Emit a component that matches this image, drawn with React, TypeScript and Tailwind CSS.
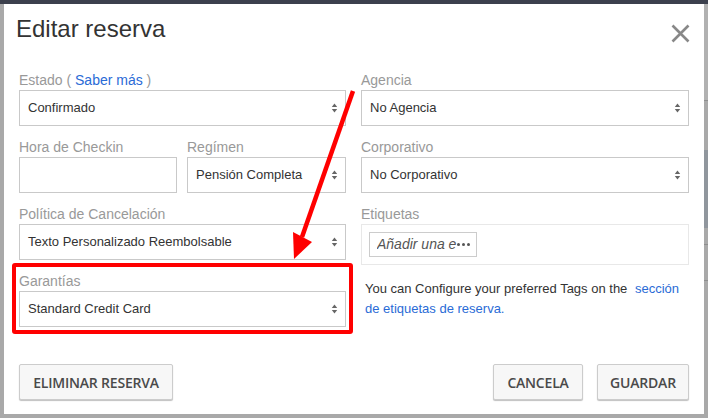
import type { ReactNode } from "react"

const SANS = "font-['Liberation_Sans',Arial,sans-serif]"

function Arrows() {
  return (
    <svg width="7" height="12" viewBox="0 0 7 12" aria-hidden>
      <path d="M3.5 1.5 L6.2 5 L0.8 5 Z" fill="#666" />
      <path d="M3.5 10.5 L6.2 7 L0.8 7 Z" fill="#666" />
    </svg>
  )
}

function Label({ children }: { children: ReactNode }) {
  return <div className="h-5 text-[14px] leading-5 text-[#999]">{children}</div>
}

function Select({ value }: { value: string }) {
  return (
    <div className="flex h-9 items-center justify-between border border-[#c9c9c9] bg-white pl-[8px] pr-[7px] text-[13px] text-[#333]">
      <span>{value}</span>
      <Arrows />
    </div>
  )
}

function Field({ label, children }: { label: ReactNode; children: ReactNode }) {
  return (
    <div className="mb-[11px]">
      <Label>{label}</Label>
      {children}
    </div>
  )
}

function Button({ children, width }: { children: ReactNode; width: string }) {
  return (
    <button
      className={`flex h-9 items-center justify-center rounded-[2px] border border-[#ccc] bg-[#f7f7f7] font-['Open_Sans',sans-serif] text-[14px] font-semibold tracking-[-0.2px] text-[#4a4a4a] shadow-[0_1px_1px_rgba(0,0,0,0.25)] ${width}`}
    >
      {children}
    </button>
  )
}

export default function App() {
  return (
    <div className={`relative h-[418px] w-[708px] overflow-hidden bg-[#a9a9a9] ${SANS}`}>
      <div className="h-[4px] bg-[#3c404d]" />
      <div className="flex">
        <div className="w-[4px]" />
        <div className="flex h-[410px] w-[700px] flex-col bg-white">
          <div className="flex items-start justify-between pl-[12px] pr-[14px] pt-[10px]">
            <h1 className="text-[24px] leading-[30px] text-[#333]">Editar reserva</h1>
            <svg width="19" height="19" viewBox="0 0 19 19" className="mt-[10px]" aria-hidden>
              <path d="M1.5 1.5 L17.5 17.5 M17.5 1.5 L1.5 17.5" stroke="#888" strokeWidth="2.6" />
            </svg>
          </div>

          <div className="mt-[26px] flex gap-[15px] px-[15px]">
            <div className="w-[327px]">
              <Field
                label={
                  <>
                    Estado ( <span className="text-[#2a6bd6]">Saber más</span> )
                  </>
                }
              >
                <Select value="Confirmado" />
              </Field>
              <div className="flex gap-[10px]">
                <div className="w-[158px]">
                  <Field label="Hora de Checkin">
                    <div className="h-9 border border-[#c9c9c9] bg-white" />
                  </Field>
                </div>
                <div className="flex-1">
                  <Field label="Regímen">
                    <Select value="Pensión Completa" />
                  </Field>
                </div>
              </div>
              <Field label="Política de Cancelación">
                <Select value="Texto Personalizado Reembolsable" />
              </Field>
              <Field label="Garantías">
                <Select value="Standard Credit Card" />
              </Field>
            </div>

            <div className="w-[328px]">
              <Field label="Agencia">
                <Select value="No Agencia" />
              </Field>
              <Field label="Corporativo">
                <Select value="No Corporativo" />
              </Field>
              <Label>Etiquetas</Label>
              <div className="h-[41px] border border-[#e8e8e8] p-[7px]">
                <div className="flex h-[25px] w-[108px] items-center overflow-hidden border border-[#ccc] pl-[7px] text-[14px] italic text-[#555]">
                  <span className="w-[80px] shrink-0 overflow-hidden whitespace-nowrap">Añadir una e</span>
                  <span className="flex gap-[2px]">
                    <span className="h-[3px] w-[3px] rounded-full bg-[#555]" />
                    <span className="h-[3px] w-[3px] rounded-full bg-[#555]" />
                    <span className="h-[3px] w-[3px] rounded-full bg-[#555]" />
                  </span>
                </div>
              </div>
              <p className="mt-[14px] pl-[4px] text-[13px] leading-5 text-[#333]">
                You can Configure your preferred Tags on the{" "}
                <span className="ml-[4px] text-[#2a6bd6]">sección de etiquetas de reserva.</span>
              </p>
            </div>
          </div>

          <div className="mt-auto flex items-center justify-between px-[15px] pb-[14px]">
            <Button width="w-[154px]">ELIMINAR RESERVA</Button>
            <div className="flex gap-[14px]">
              <Button width="w-[90px]">CANCELA</Button>
              <Button width="w-[92px]">GUARDAR</Button>
            </div>
          </div>
        </div>
        <div className="flex w-[4px] flex-col">
          <div className="h-[96px] bg-[#b1b1b1]" />
          <div className="h-[1px] bg-[#8e8e8e]" />
          <div className="h-[49px] bg-[#a9a9a9]" />
          <div className="h-[78px] bg-[#90969d]" />
          <div className="h-[16px] bg-[#a9a9a9]" />
          <div className="h-[1px] bg-[#8e8e8e]" />
          <div className="h-[35px] bg-[#a9a9a9]" />
          <div className="h-[1px] bg-[#8e8e8e]" />
        </div>
      </div>

      {/* annotation: red box + arrow */}
      <div className="pointer-events-none absolute left-[12px] top-[263px] h-[71px] w-[341px] rounded-[3px] border-4 border-[#f00]" />
      <svg className="pointer-events-none absolute inset-0" width="708" height="418" aria-hidden>
        <path d="M353 91 L302 237" stroke="#f00" strokeWidth="4.5" />
        <path d="M293 232 L312 242 L294 259 Z" fill="#f00" />
      </svg>
    </div>
  )
}
